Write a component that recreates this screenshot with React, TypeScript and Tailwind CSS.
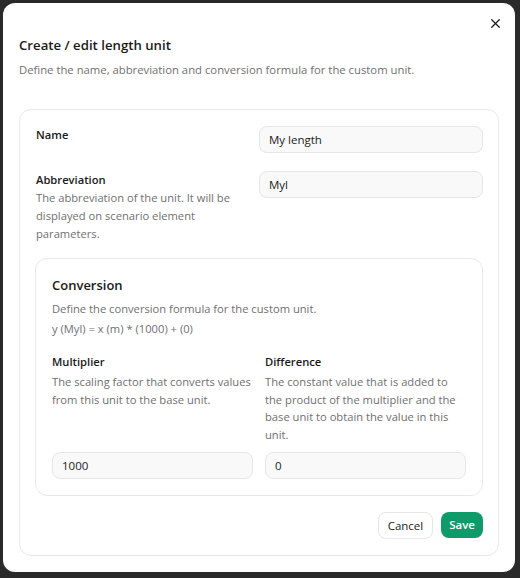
import { X } from "lucide-react";

function Field({ value }: { value: string }) {
  return (
    <input
      readOnly
      value={value}
      className="h-[27px] w-full rounded-lg border border-[#e6e6e6] bg-[#f9f9f9] px-[9px] text-[11.5px] text-[#1a1a1a] outline-none"
    />
  );
}

export default function App() {
  return (
    <div className="min-h-[578px] bg-[#2a2a2a] pl-[3px] pt-[3px] font-['Open_Sans',sans-serif]">
      <div className="relative flex h-[569px] w-[512px] flex-col rounded-xl bg-white px-4 pb-4 pt-[32px]">
        <button className="absolute right-[12px] top-[13px] text-[#1a1a1a]">
          <X size={15} strokeWidth={2.1} />
        </button>

        <h2 className="text-[13.2px] font-semibold leading-5 text-[#1a1a1a]">
          Create / edit length unit
        </h2>
        <p className="mt-[6px] text-[11.3px] leading-[18px] text-[#707070]">
          Define the name, abbreviation and conversion formula for the custom unit.
        </p>

        <div className="mt-[30px] flex flex-1 flex-col rounded-xl border border-[#e8e8e8] px-[15px] pb-4 pt-[16px]">
          <div className="flex gap-4">
            <div className="flex-1 pl-px text-[11.2px] font-semibold leading-[18px] text-[#1a1a1a]">Name</div>
            <div className="w-[224px]">
              <Field value="My length" />
            </div>
          </div>

          <div className="mt-[18px] flex gap-4">
            <div className="flex-1 pl-px">
              <div className="text-[11.2px] font-semibold leading-[18px] text-[#1a1a1a]">Abbreviation</div>
              <p className="text-[11.2px] leading-[18px] text-[#707070]">
                The abbreviation of the unit. It will be displayed on scenario element parameters.
              </p>
            </div>
            <div className="w-[224px]">
              <Field value="Myl" />
            </div>
          </div>

          <div className="mt-[15px] rounded-xl border border-[#e8e8e8] p-4">
            <h3 className="text-[13px] font-semibold leading-5 text-[#1a1a1a]">Conversion</h3>
            <p className="mt-[4px] text-[11.2px] leading-[20px] text-[#707070]">
              Define the conversion formula for the custom unit.
              <br />y (Myl) = x (m) * (1000) + (0)
            </p>

            <div className="mt-[14px] grid grid-cols-2 gap-x-3">
              <div className="flex flex-col">
                <div className="text-[11.2px] font-semibold leading-[18px] text-[#1a1a1a]">Multiplier</div>
                <p className="mt-[2px] text-[11.2px] leading-[17.6px] text-[#707070]">
                  The scaling factor that converts values from this unit to the base unit.
                </p>
              </div>
              <div className="flex flex-col">
                <div className="text-[11.2px] font-semibold leading-[18px] text-[#1a1a1a]">Difference</div>
                <p className="mt-[2px] text-[11.2px] leading-[17.6px] text-[#707070]">
                  The constant value that is added to the product of the multiplier and the base unit to obtain the value in this unit.
                </p>
              </div>
              <div className="mt-[9px]">
                <Field value="1000" />
              </div>
              <div className="mt-[9px]">
                <Field value="0" />
              </div>
            </div>
          </div>

          <div className="mt-auto flex justify-end gap-2">
            <button className="h-[27px] rounded-lg border border-[#e6e6e6] bg-white px-[9px] text-[11.5px] text-[#1a1a1a]">
              Cancel
            </button>
            <button className="h-[26px] rounded-lg bg-[#0f9a69] px-[8px] text-[11.5px] font-semibold text-white">
              Save
            </button>
          </div>
        </div>
      </div>
    </div>
  );
}
